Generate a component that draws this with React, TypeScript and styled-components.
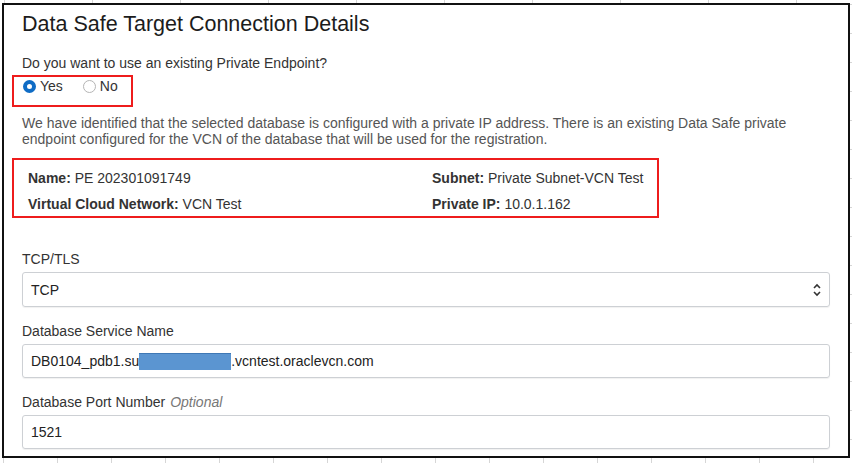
import styled, { createGlobalStyle } from "styled-components";

const GlobalStyle = createGlobalStyle`
    html, body {
        margin: 0;
        padding: 0;
    }
    body {
        font-family: "Liberation Sans", Arial, sans-serif;
        color: #333;
    }
`

const Sheet = styled.div`
    width: 852px;
    height: 463px;
    box-sizing: border-box;
    padding: 3px 0 0 2px;
    background-color: #fff;
    background-image:
        linear-gradient(to right, #d6d6d6 1px, transparent 1px),
        linear-gradient(to right, #d6d6d6 1px, transparent 1px),
        linear-gradient(to bottom, #d6d6d6 1px, transparent 1px);
    background-size: 88px 3px, 54px 6px, 3px 29px;
    background-position: 4px 0, 3px 458px, 850px 4px;
    background-repeat: repeat-x, repeat-x, repeat-y;
`

const Panel = styled.section`
    width: 848px;
    height: 455px;
    box-sizing: border-box;
    border: 2px solid #111;
    background: #fff;
    padding: 7px 18px 0;
    font-size: 14px;
    line-height: 16px;
`

const Title = styled.h2`
    margin: 0;
    font-size: 21.5px;
    line-height: 25px;
    font-weight: 400;
    color: #1c1c1c;
`

const Question = styled.p`
    margin: 18px 0 0;
    color: #333;
`

const Highlight = styled.div<{ $width: number }>`
    box-sizing: border-box;
    width: ${p => p.$width}px;
    margin-left: -10px;
    border: 2px solid #ee1c1c;
`

const RadioGroup = styled(Highlight)`
    margin-top: 4px;
    padding: 1px 0 11px 9px;
    display: flex;
    gap: 20px;
`

const RadioOption = styled.label`
    display: flex;
    align-items: center;
    gap: 4px;
    color: #333;
`

const RadioDot = styled.span<{ $checked?: boolean }>`
    box-sizing: border-box;
    width: 13px;
    height: 13px;
    border-radius: 50%;
    border: ${p => (p.$checked ? "4px solid #0f6cc5" : "1px solid #b5b5b5")};
    background: #fff;
`

const Info = styled.p`
    margin: 8px 0 0;
    color: #555;
`

const DetailsBox = styled(Highlight)`
    margin-top: 11px;
    padding: 10px 14px 4px;
    display: grid;
    grid-template-columns: 404px auto;
    row-gap: 10px;
    color: #333;
`

const Detail = styled.div`
    white-space: nowrap;

    b {
        font-weight: 700;
    }
`

const Field = styled.div<{ $top: number }>`
    margin-top: ${p => p.$top}px;
`

const Label = styled.div`
    color: #333;
    margin-bottom: 5px;

    em {
        margin-left: 5px;
        color: #777;
    }
`

const Control = styled.div<{ $height?: number }>`
    box-sizing: border-box;
    height: ${p => p.$height ?? 34}px;
    border: 1px solid #cdd0d4;
    border-radius: 3px;
    box-shadow: 0 1px 1px rgba(0, 0, 0, 0.06);
    padding: 0 8px;
    display: flex;
    align-items: center;
    color: #222;
    white-space: nowrap;
`

const SelectBox = styled(Control)`
    justify-content: space-between;
`

const Redacted = styled.span`
    display: inline-block;
    width: 92px;
    height: 17px;
    background: #5b95d1;
    border-top: 1px solid #3f78b5;
    box-sizing: border-box;
`

const UpDown = () => (
    <svg width="8" height="14" viewBox="0 0 8 14" fill="none" stroke="#333" strokeWidth="1.6">
        <path d="M1 5 L4 2 L7 5" />
        <path d="M1 9 L4 12 L7 9" />
    </svg>
)

const details = [
    { label: "Name:", value: "PE 202301091749" },
    { label: "Subnet:", value: "Private Subnet-VCN Test" },
    { label: "Virtual Cloud Network:", value: "VCN Test" },
    { label: "Private IP:", value: "10.0.1.162" },
]

export default function App() {
    return (
        <Sheet>
            <GlobalStyle />
            <Panel>
                <Title>Data Safe Target Connection Details</Title>
                <Question>Do you want to use an existing Private Endpoint?</Question>
                <RadioGroup $width={121}>
                    <RadioOption>
                        <RadioDot $checked />
                        Yes
                    </RadioOption>
                    <RadioOption>
                        <RadioDot />
                        No
                    </RadioOption>
                </RadioGroup>
                <Info>
                    We have identified that the selected database is configured with a private IP address. There is an existing Data Safe private endpoint configured for the VCN of the database that will be used for the registration.
                </Info>
                <DetailsBox $width={647}>
                    {details.map(d => (
                        <Detail key={d.label}>
                            <b>{d.label}</b> {d.value}
                        </Detail>
                    ))}
                </DetailsBox>

                <Field $top={33}>
                    <Label>TCP/TLS</Label>
                    <SelectBox $height={35}>
                        <span>TCP</span>
                        <UpDown />
                    </SelectBox>
                </Field>

                <Field $top={16}>
                    <Label>Database Service Name</Label>
                    <Control>
                        <span>DB0104_pdb1.su</span>
                        <Redacted />
                        <span>.vcntest.oraclevcn.com</span>
                    </Control>
                </Field>

                <Field $top={16}>
                    <Label>
                        Database Port Number<em>Optional</em>
                    </Label>
                    <Control>1521</Control>
                </Field>
            </Panel>
        </Sheet>
    )
}
